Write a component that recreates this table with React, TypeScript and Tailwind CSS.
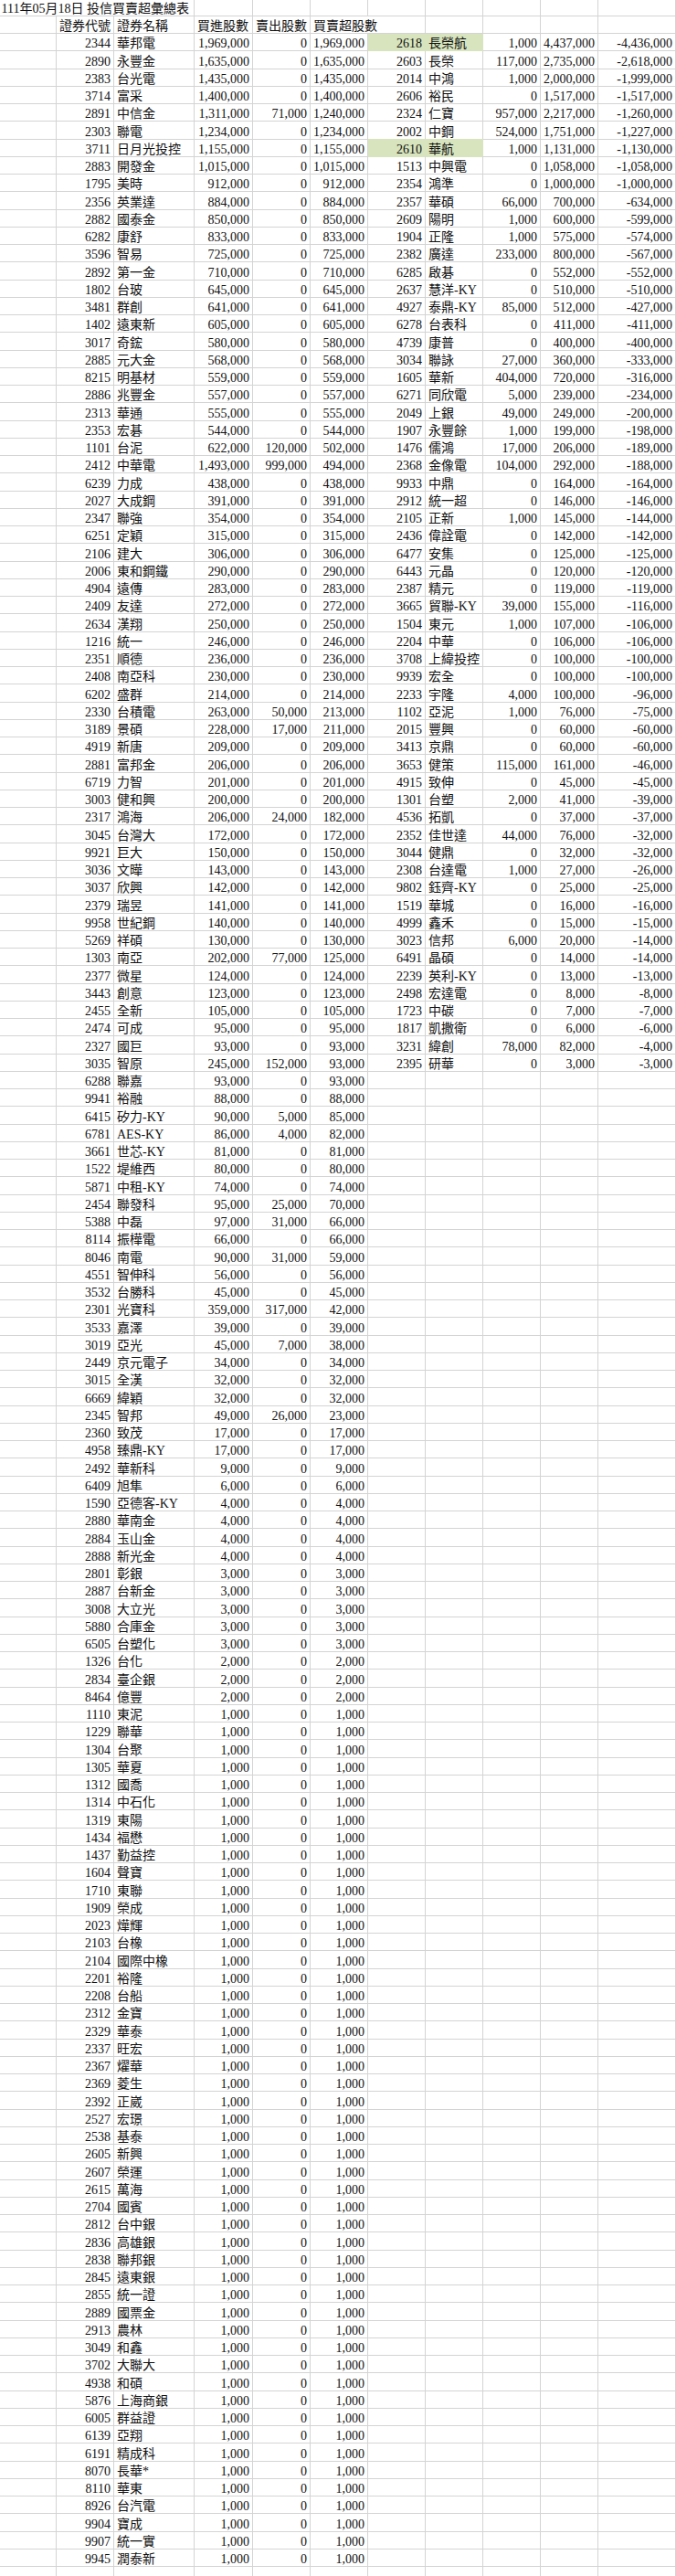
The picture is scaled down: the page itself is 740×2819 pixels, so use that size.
import React from 'react';

const LEFT = `2344 華邦電 1969 0
2890 永豐金 1635 0
2383 台光電 1435 0
3714 富采 1400 0
2891 中信金 1311 71
2303 聯電 1234 0
3711 日月光投控 1155 0
2883 開發金 1015 0
1795 美時 912 0
2356 英業達 884 0
2882 國泰金 850 0
6282 康舒 833 0
3596 智易 725 0
2892 第一金 710 0
1802 台玻 645 0
3481 群創 641 0
1402 遠東新 605 0
3017 奇鋐 580 0
2885 元大金 568 0
8215 明基材 559 0
2886 兆豐金 557 0
2313 華通 555 0
2353 宏碁 544 0
1101 台泥 622 120
2412 中華電 1493 999
6239 力成 438 0
2027 大成鋼 391 0
2347 聯強 354 0
6251 定穎 315 0
2106 建大 306 0
2006 東和鋼鐵 290 0
4904 遠傳 283 0
2409 友達 272 0
2634 漢翔 250 0
1216 統一 246 0
2351 順德 236 0
2408 南亞科 230 0
6202 盛群 214 0
2330 台積電 263 50
3189 景碩 228 17
4919 新唐 209 0
2881 富邦金 206 0
6719 力智 201 0
3003 健和興 200 0
2317 鴻海 206 24
3045 台灣大 172 0
9921 巨大 150 0
3036 文曄 143 0
3037 欣興 142 0
2379 瑞昱 141 0
9958 世紀鋼 140 0
5269 祥碩 130 0
1303 南亞 202 77
2377 微星 124 0
3443 創意 123 0
2455 全新 105 0
2474 可成 95 0
2327 國巨 93 0
3035 智原 245 152
6288 聯嘉 93 0
9941 裕融 88 0
6415 矽力-KY 90 5
6781 AES-KY 86 4
3661 世芯-KY 81 0
1522 堤維西 80 0
5871 中租-KY 74 0
2454 聯發科 95 25
5388 中磊 97 31
8114 振樺電 66 0
8046 南電 90 31
4551 智伸科 56 0
3532 台勝科 45 0
2301 光寶科 359 317
3533 嘉澤 39 0
3019 亞光 45 7
2449 京元電子 34 0
3015 全漢 32 0
6669 緯穎 32 0
2345 智邦 49 26
2360 致茂 17 0
4958 臻鼎-KY 17 0
2492 華新科 9 0
6409 旭隼 6 0
1590 亞德客-KY 4 0
2880 華南金 4 0
2884 玉山金 4 0
2888 新光金 4 0
2801 彰銀 3 0
2887 台新金 3 0
3008 大立光 3 0
5880 合庫金 3 0
6505 台塑化 3 0
1326 台化 2 0
2834 臺企銀 2 0
8464 億豐 2 0
1110 東泥 1 0
1229 聯華 1 0
1304 台聚 1 0
1305 華夏 1 0
1312 國喬 1 0
1314 中石化 1 0
1319 東陽 1 0
1434 福懋 1 0
1437 勤益控 1 0
1604 聲寶 1 0
1710 東聯 1 0
1909 榮成 1 0
2023 燁輝 1 0
2103 台橡 1 0
2104 國際中橡 1 0
2201 裕隆 1 0
2208 台船 1 0
2312 金寶 1 0
2329 華泰 1 0
2337 旺宏 1 0
2367 燿華 1 0
2369 菱生 1 0
2392 正崴 1 0
2527 宏璟 1 0
2538 基泰 1 0
2605 新興 1 0
2607 榮運 1 0
2615 萬海 1 0
2704 國賓 1 0
2812 台中銀 1 0
2836 高雄銀 1 0
2838 聯邦銀 1 0
2845 遠東銀 1 0
2855 統一證 1 0
2889 國票金 1 0
2913 農林 1 0
3049 和鑫 1 0
3702 大聯大 1 0
4938 和碩 1 0
5876 上海商銀 1 0
6005 群益證 1 0
6139 亞翔 1 0
6191 精成科 1 0
8070 長華* 1 0
8110 華東 1 0
8926 台汽電 1 0
9904 寶成 1 0
9907 統一實 1 0
9945 潤泰新 1 0`;

const RIGHT = `2618 長榮航 1 4437
2603 長榮 117 2735
2014 中鴻 1 2000
2606 裕民 0 1517
2324 仁寶 957 2217
2002 中鋼 524 1751
2610 華航 1 1131
1513 中興電 0 1058
2354 鴻準 0 1000
2357 華碩 66 700
2609 陽明 1 600
1904 正隆 1 575
2382 廣達 233 800
6285 啟碁 0 552
2637 慧洋-KY 0 510
4927 泰鼎-KY 85 512
6278 台表科 0 411
4739 康普 0 400
3034 聯詠 27 360
1605 華新 404 720
6271 同欣電 5 239
2049 上銀 49 249
1907 永豐餘 1 199
1476 儒鴻 17 206
2368 金像電 104 292
9933 中鼎 0 164
2912 統一超 0 146
2105 正新 1 145
2436 偉詮電 0 142
6477 安集 0 125
6443 元晶 0 120
2387 精元 0 119
3665 貿聯-KY 39 155
1504 東元 1 107
2204 中華 0 106
3708 上緯投控 0 100
9939 宏全 0 100
2233 宇隆 4 100
1102 亞泥 1 76
2015 豐興 0 60
3413 京鼎 0 60
3653 健策 115 161
4915 致伸 0 45
1301 台塑 2 41
4536 拓凱 0 37
2352 佳世達 44 76
3044 健鼎 0 32
2308 台達電 1 27
9802 鈺齊-KY 0 25
1519 華城 0 16
4999 鑫禾 0 15
3023 信邦 6 20
6491 晶碩 0 14
2239 英利-KY 0 13
2498 宏達電 0 8
1723 中碳 0 7
1817 凱撒衛 0 6
3231 緯創 78 82
2395 研華 0 3`;

type Item = { code: string; name: string; buy: number; sell: number };

const parse = (s: string): Item[] =>
  s.split('\n').map((line) => {
    const [code, name, b, se] = line.trim().split(' ');
    return { code, name, buy: Number(b) * 1000, sell: Number(se) * 1000 };
  });

const L = parse(LEFT);
const R = parse(RIGHT);

const fmt = (n: number) => {
  const s = Math.abs(n).toString().replace(/\B(?=(\d{3})+(?!\d))/g, ',');
  return n < 0 ? '-' + s : s;
};

const ROW =
  'grid grid-cols-[62px_63px_88px_64px_63px_63px_63px_63px_63px_63px_85px]';

type CellProps = {
  t?: string;
  right?: boolean;
  noR?: boolean;
  green?: boolean;
  pt?: string;
};

function Cell({ t = '', right = false, noR = false, green = false }: CellProps) {
  return (
    <div
      className={
        'h-full border-b px-[3px] pt-[3.8px] leading-[15px] whitespace-nowrap ' +
        (noR ? '' : 'border-r ') +
        (green ? 'bg-[#d7e4bd] border-[#d7e4bd] ' : 'border-[#d4d4d4] ') +
        (right ? 'text-right' : 'text-left')
      }
    >
      {t}
    </div>
  );
}

export default function App() {
  const rows = [];
  for (let i = 0; i < 145; i++) {
    const l = L[i];
    const r = R[i];
    const g = i === 0 || i === 6;
    rows.push(
      <div key={i} className={ROW + ' h-[19.264px]'}>
        <Cell />
        <Cell t={l ? l.code : ''} right />
        <Cell t={l ? l.name : ''} />
        <Cell t={l ? fmt(l.buy) : ''} right />
        <Cell t={l ? fmt(l.sell) : ''} right />
        <Cell t={l ? fmt(l.buy - l.sell) : ''} right />
        <Cell t={r ? r.code : ''} right green={g} />
        <Cell t={r ? r.name : ''} green={g} />
        <Cell t={r ? fmt(r.buy) : ''} right />
        <Cell t={r ? fmt(r.sell) : ''} right />
        <Cell t={r ? fmt(r.buy - r.sell) : ''} right />
      </div>
    );
  }

  return (
    <div className="w-[740px] h-[2819px] overflow-hidden bg-white text-[#111] text-[14px] font-['Liberation_Serif','Noto_Sans_CJK_TC',serif]">
      {/* title row */}
      <div className={ROW + ' h-[17.4px]'}>
        <div className="h-full border-b border-[#d4d4d4] pl-[1.5px] pt-[2.2px] leading-[15px] whitespace-nowrap">
          111年05月18日 投信買賣超彙總表
        </div>
        <div className="h-full border-b border-[#d4d4d4]" />
        <div className="h-full border-b border-r border-[#d4d4d4]" />
        {Array.from({ length: 8 }).map((_, k) => (
          <div key={k} className="h-full border-b border-r border-[#d4d4d4]" />
        ))}
      </div>
      {/* header row */}
      <div className={ROW + ' h-[19.3px]'}>
        <Cell />
        <Cell t="證券代號" />
        <Cell t="證券名稱" />
        <Cell t="買進股數" />
        <Cell t="賣出股數" />
        <Cell t="買賣超股數" noR />
        <Cell />
        <Cell />
        <Cell />
        <Cell />
        <Cell />
      </div>
      {rows}
    </div>
  );
}
